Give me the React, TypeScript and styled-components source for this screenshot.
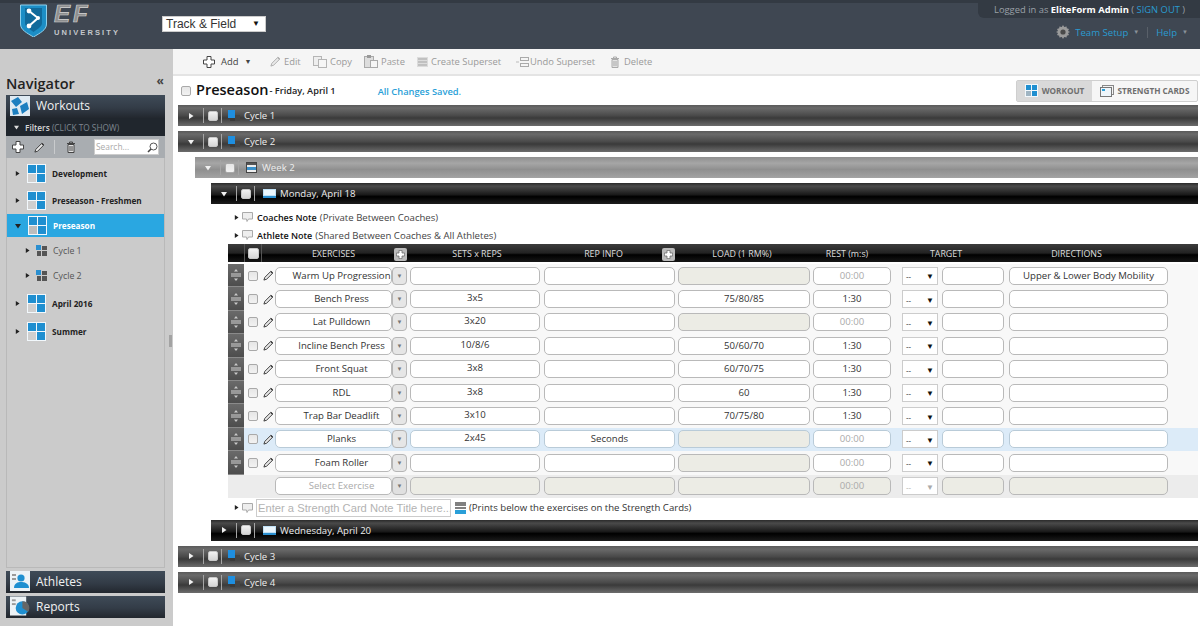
import React from 'react';
import styled, { createGlobalStyle } from 'styled-components';

const Global = createGlobalStyle`
  html, body { margin: 0; padding: 0; background: #fff; height: 626px; overflow: hidden; }
  body { font-family: "Open Sans", "Noto Sans", sans-serif; }
  * { box-sizing: border-box; }
`;

const Page = styled.div`width: 1200px; height: 626px; display: flex; flex-direction: column; overflow: hidden;`;

const Header = styled.header`
  height: 49px; flex: none; background: #3f4752; border-top: 3px solid #333a43;
  display: flex; position: relative;
`;
const LogoBox = styled.div`width: 162px; flex: none; padding: 1px 0 0 20px; display: flex; gap: 7px;`;
const LogoText = styled.div`display: flex; flex-direction: column; color: #b9b9b9;`;
const LogoEF = styled.span`display: block; height: 24px; margin-top: -2px; font: italic 900 24px/24px "Liberation Sans", sans-serif; letter-spacing: 3px; color: #8e8f8f; -webkit-text-stroke: .7px #d2d2d2;`;
const LogoSub = styled.span`display: block; font: 700 7.5px/9px "Liberation Sans", sans-serif; letter-spacing: 2.1px; color: #c4c8cc; margin-top: 2px;`;
const TeamSelect = styled.div`
  margin-top: 13px; width: 104px; height: 16px; background: #fff; border: 1px solid #ccc;
  font: 12px/14px "Liberation Sans", sans-serif; color: #333; padding-left: 3px; position: relative;
`;
const SelectArrow = styled.span`position: absolute; right: 5px; top: 0; font-size: 8px; color: #111;`;
const HeaderRight = styled.div`margin-left: auto; display: flex; flex-direction: column; align-items: flex-end;`;
const LoginTab = styled.div`
  width: 222px; height: 16px; background: #333a43; border-bottom-left-radius: 6px; margin-top: -1px;
  font-size: 9.4px; line-height: 15px; color: #9aa0a7; padding-left: 16px; white-space: nowrap;
`;
const LoginName = styled.b`color: #fff; font-weight: 700;`;
const LinkBlue = styled.span`color: #2a9bd0;`;
const MenuRow = styled.div`display: flex; align-items: center; height: 18px; margin-top: 5px; padding-right: 9px; font-size: 9.6px; color: #2a9bd0; gap: 5px;`;
const MenuCaret = styled.span`color: #8a929a; font-size: 6px; margin-right: 3px;`;
const MenuSep = styled.span`width: 1px; height: 11px; background: #596069; margin-right: 3px;`;

const Body = styled.div`flex: 1; display: flex; min-height: 0;`;

const Sidebar = styled.aside`width: 173px; flex: none; background: #cbcbcb; padding: 0 8px 8px 6px; display: flex; flex-direction: column; position: relative;`;
const NavHead = styled.div`height: 46px; display: flex; align-items: flex-end; justify-content: space-between; padding-right: 1px;`;
const NavTitle = styled.div`font-size: 14.5px; font-weight: 600; color: #222; line-height: 21px; margin-bottom: 1px;`;
const Chevrons = styled.div`font-size: 12px; font-weight: 700; color: #444; line-height: 14px; margin-bottom: 7px;`;
const Section = styled.div`
  height: 23px; flex: none; display: flex; align-items: center; gap: 6px; padding: 0 0 2px 4px; color: #f1f1f1; font-size: 12px;
  background: linear-gradient(#3f4b58, #333c47 55%, #22272e);
`;
const SectionBottom = styled(Section)`height: 22px; margin-top: 3px;`;
const FilterBar = styled.div`
  height: 18px; background: #20262d; color: #d8d8d8; font-size: 8.3px; font-weight: 600; display: flex; align-items: center; gap: 6px; padding-left: 8px;
`;
const FilterHint = styled.span`color: #7f8790; font-weight: 400;`;
const Tools = styled.div`height: 22px; background: #a9adb1; display: flex; align-items: center; padding-left: 6px; position: relative;`;
const ToolSpace = styled.span`width: 10px; flex: none;`;
const ToolDiv = styled.span`width: 1px; height: 14px; background: #c9cbcd; margin: 0 10px 0 9px;`;
const SearchBox = styled.div`
  margin-left: auto; margin-right: 6px; width: 65px; height: 16px; background: #fff; border: 1px solid #ccc;
  font-size: 8.4px; color: #aaa; line-height: 14px; padding-left: 1px; display: flex; justify-content: space-between; align-items: center;
`;
const Tree = styled.div`flex: 1; border: 1px solid #b9b9b9; border-top: 0; padding-top: 2px;`;
const TreeItem = styled.div<{ $active?: boolean; $top?: number }>`
  height: ${p => (p.$active ? '23px' : '27px')}; margin-top: ${p => p.$top ?? 0}px;
  display: flex; align-items: center; padding-left: 8px; gap: 7px;
  background: ${p => (p.$active ? '#2aa7e1' : 'transparent')};
  color: ${p => (p.$active ? '#fff' : '#222')}; font-size: 8.2px; font-weight: 700; white-space: nowrap;
`;
const TreeLabel = styled.span`margin-left: -1px;`;
const SubList = styled.div`padding-top: 1px;`;
const SubItem = styled.div`height: 25px; display: flex; align-items: center; padding-left: 18px; gap: 6px; font-size: 8.8px; color: #555;`;
const Splitter = styled.span`position: absolute; right: 1px; top: 286px; width: 3px; height: 12px; background: #a3a3a3;`;

const Main = styled.main`flex: 1; min-width: 0; display: flex; flex-direction: column;`;
const Toolbar = styled.div`
  height: 27px; flex: none; background: #f5f5f5; border-bottom: 2px solid #e4e4e4; padding-left: 30px;
  display: flex; align-items: center; font-size: 9.4px; color: #9a9a9a;
`;
const ToolBtn = styled.span<{ $dark?: boolean; $w: number; $gap?: number }>`
  width: ${p => p.$w}px; flex: none; display: flex; align-items: center; gap: ${p => p.$gap ?? 3}px; white-space: nowrap;
  color: ${p => (p.$dark ? '#444' : '#9a9a9a')};
`;
const AddCaret = styled.span`font-size: 7px; margin-left: 0;`;
const TitleRow = styled.div`height: 29px; flex: none; display: flex; align-items: center; padding: 0 2px 0 8px; position: relative;`;
const Check = styled.span<{ $size?: number; $light?: boolean }>`
  width: ${p => p.$size ?? 10}px; height: ${p => p.$size ?? 10}px; flex: none; display: block; border-radius: 2px;
  background: ${p => (p.$light ? 'linear-gradient(#f2f2f2,#d5d5d5)' : 'linear-gradient(#e6e6e6,#f2f2f2)')};
  border: 1px solid ${p => (p.$light ? '#c8c8c8' : '#a9a9a9')};
`;
const PageTitle = styled.h1`margin: -2px 0 0 5px; font-size: 14.5px; font-weight: 600; color: #111; line-height: 20px;`;
const PageDate = styled.span`font-size: 9.2px; font-weight: 600; color: #222; margin-left: 1px; margin-top: -1px; white-space: nowrap;`;
const Saved = styled.span`font-size: 9.3px; font-weight: 600; color: #2a9fd8; margin-left: 42px; margin-top: 1px;`;
const ViewSwitch = styled.div`margin-left: auto; display: flex; height: 22px; border: 1px solid #cfcfcf; border-radius: 2px; background: #f6f6f6; margin-top: 0;`;
const ViewBtn = styled.span<{ $on?: boolean; $w: number }>`
  width: ${p => p.$w}px; display: flex; align-items: center; justify-content: center; gap: 4px;
  font-size: 8.2px; font-weight: 700; color: #6f6f6f; white-space: nowrap;
  background: ${p => (p.$on ? '#d9d9d9' : 'transparent')};
`;

const Content = styled.div`padding: 0 2px 0 5px; display: flex; flex-direction: column;`;
const barBg = {
  cycle: 'linear-gradient(#5a5a5a, #6a6a6a 15%, #4a4a4a 50%, #3a3a3a 62%, #6c6c6c)',
  week: 'linear-gradient(#8f8f8f, #a6a6a6 30%, #8f8f8f 60%, #a3a3a3)',
  day: 'linear-gradient(#2a2a2a, #4a4a4a 15%, #1a1a1a 55%, #000 65%, #1c1c1c)',
};
const Bar = styled.div<{ $kind: 'cycle' | 'week' | 'day'; $indent?: number; $top?: number }>`
  height: 21px; flex: none; margin-left: ${p => p.$indent ?? 0}px; margin-top: ${p => p.$top ?? 5}px;
  background: ${p => barBg[p.$kind]}; display: flex; align-items: center; color: #eee; font-size: 9.6px;
`;
const BarToggle = styled.span`width: 25px; flex: none; display: flex; justify-content: center;`;
const BarCell = styled.span`
  width: 19px; height: 15px; flex: none; display: flex; align-items: center; justify-content: center;
  border-left: 1px solid #a5a5a5; border-right: 1px solid #a5a5a5; margin-right: 6px;
`;
const BarLabel = styled.span`margin-left: 4px; white-space: nowrap;`;

const WorkoutBlock = styled.div`margin-left: 50px; display: flex; flex-direction: column;`;
const NoteRow = styled.div<{ $h: number; $top?: number }>`
  height: ${p => p.$h}px; margin-top: ${p => p.$top ?? 0}px; display: flex; align-items: center; gap: 3px; padding-left: 6px;
  font-size: 9.6px; color: #444; white-space: nowrap;
`;
const NoteStrong = styled.b`color: #111; font-weight: 600; font-size: 9px; margin-left: 1px;`;
const NoteHint = styled.span`color: #333;`;

const COLS = '16px 18px 13px 117px 18px 130px 4px 131px 3px 132px 3px 78px 11px 36px 4px 62px 5px 159px 1fr';
const TableHead = styled.div`
  height: 18px; display: grid; grid-template-columns: ${COLS}; align-items: center;
  background: linear-gradient(#3c3c3c, #222 50%, #000 60%, #161616);
  color: #ddd; font-size: 8.9px; text-align: center; white-space: nowrap;
`;
const HeadCheck = styled.span`
  grid-column: 2; align-self: stretch; display: flex; align-items: center; justify-content: center;
  border-left: 1px solid #555; border-right: 1px solid #555;
`;
const HeadCell = styled.span<{ $col: string; $pr?: number; $pl?: number }>`
  grid-column: ${p => p.$col}; position: relative;
  padding-right: ${p => p.$pr ?? 0}px; padding-left: ${p => p.$pl ?? 0}px;
`;
const HeadPlus = styled.span<{ $right: number }>`
  position: absolute; right: ${p => p.$right}px; top: 1px; width: 13px; height: 13px; background: #bbb; border-radius: 2px;
  display: flex; align-items: center; justify-content: center;
`;
const Rows = styled.div`margin-top: 2px;`;
const Row = styled.div<{ $tone?: 'hi' | 'blank' }>`
  height: 23.4px; display: grid; grid-template-columns: ${COLS}; align-items: center;
  background: ${p => (p.$tone === 'hi' ? '#dcebf8' : p.$tone === 'blank' ? '#ececec' : '#f8f8f8')};
`;
const Handle = styled.span`
  grid-column: 1; align-self: stretch; background: linear-gradient(#6a6a6a, #4d4d4d);
  display: flex; align-items: center; justify-content: center; border-bottom: 1px solid #8a8a8a;
`;
const CheckCell = styled.span`grid-column: 2; justify-self: center;`;
const PencilCell = styled.span`grid-column: 3; justify-self: center; display: flex;`;
const Field = styled.span<{ $col: number; $off?: boolean; $muted?: boolean; $hi?: boolean }>`
  grid-column: ${p => p.$col}; height: 18px; border-radius: 5px; text-align: center; font-size: 9.6px; line-height: 16px;
  border: 1px solid ${p => (p.$hi ? '#b9cbd8' : '#b9b9b9')};
  background: ${p => (p.$off ? '#ecece5' : '#fff')};
  color: ${p => (p.$muted ? '#aaa' : '#333')}; white-space: nowrap; overflow: hidden;
`;
const ExerciseField = styled(Field)`padding-left: 16px;`;
const SetsField = styled(Field)`line-height: 14px;`;
const ExButton = styled.span<{ $off?: boolean }>`
  grid-column: 5; width: 15px; height: 18px; background: ${p => (p.$off ? '#e0e0e0' : '#e6e6e6')}; border: 1px solid #b5b5b5; border-radius: 4px;
  display: flex; align-items: center; justify-content: center; font-size: 6px; color: #777;
`;
const MiniSelect = styled.span<{ $off?: boolean }>`
  grid-column: 14; height: 18px; border: 1px solid #ccc; background: #fff;
  display: flex; align-items: center; justify-content: space-between; padding: 0 3px; font-size: 8px; color: ${p => (p.$off ? '#aaa' : '#111')};
`;
const MiniArrow = styled.span`font-size: 8px;`;
const NoteInput = styled.span`
  width: 195px; height: 18px; border: 1px solid #ccc; background: #fff; color: #b3b3b3; margin-left: 0;
  font: 11.2px/16px "Liberation Sans", sans-serif; padding-left: 1px; overflow: hidden;
`;
const StackIcon = styled.span`width: 11px; height: 12px; flex: none; margin-left: 1px; background: linear-gradient(#808080 0 30%, #fff 30% 40%, #808080 40% 60%, #fff 60% 70%, #2a9fd8 70%);`;

const Tri = ({ dir = 'right', color = '#222', size = 6 }: { dir?: 'right' | 'down'; color?: string; size?: number }) => (
  <svg width={size} height={size} viewBox="0 0 6 6" style={{ flex: 'none' }}>
    <path d={dir === 'right' ? 'M1 0 L5.5 3 L1 6 Z' : 'M0 1 L6 1 L3 5.5 Z'} fill={color} />
  </svg>
);

const Grid4 = ({ size = 19, off = '#cfcfcf' }: { size?: number; off?: string }) => {
  const c = size / 2;
  return (
    <svg width={size} height={size} viewBox={`0 0 ${size} ${size}`} style={{ flex: 'none' }}>
      <rect x={0} y={0} width={size} height={size} fill="#f2f8fc" />
      <rect x={1} y={1} width={c - 1.5} height={c - 1.5} fill="#1f8fd0" />
      <rect x={c + 0.5} y={1} width={c - 1.5} height={c - 1.5} fill="#1f8fd0" />
      <rect x={1} y={c + 0.5} width={c - 1.5} height={c - 1.5} fill={off} />
      <rect x={c + 0.5} y={c + 0.5} width={c - 1.5} height={c - 1.5} fill="#1f8fd0" />
    </svg>
  );
};
const SmallCycle = () => (
  <svg width="11" height="11" viewBox="0 0 11 11" style={{ flex: 'none' }}>
    <rect x="0" y="0" width="5" height="5" fill="#2a8fd0" /><rect x="6" y="1" width="5" height="4" fill="#555" />
    <rect x="1" y="6" width="4" height="5" fill="#555" /><rect x="6" y="6" width="5" height="5" fill="#555" />
  </svg>
);
const BarCycleIcon = () => (
  <svg width="12" height="12" viewBox="0 0 12 12" style={{ flex: 'none' }}>
    <rect x="0" y="0" width="7" height="8" fill="#1f8fe0" /><rect x="7" y="5" width="5" height="6" fill="#444" /><rect x="2" y="8" width="5" height="3" fill="#3a3a3a" />
  </svg>
);
const WeekIcon = () => (
  <svg width="13" height="11" viewBox="0 0 13 11" style={{ flex: 'none' }}>
    <rect x="1.5" y=".5" width="10" height="10" fill="#eee" stroke="#444" strokeWidth="1" /><rect x="2" y="1" width="9" height="2" fill="#555" /><rect x="2" y="5" width="9" height="3" fill="#3a8fc8" />
  </svg>
);
const DayIcon = () => (
  <svg width="15" height="9" viewBox="0 0 15 9" style={{ flex: 'none' }}>
    <rect x="2" width="13" height="9" fill="#bfe0f5" /><rect x="3" y="1" width="11" height="5" fill="#eaf6fd" /><rect x="2" y="7" width="13" height="2" fill="#2a8fd0" />
  </svg>
);
const Plus = ({ size = 12, color = '#555', fill = '#fff' }: { size?: number; color?: string; fill?: string }) => (
  <svg width={size} height={size} viewBox="0 0 12 12" style={{ flex: 'none' }}>
    <path d="M4 .5 H8 V4 H11.5 V8 H8 V11.5 H4 V8 H.5 V4 H4 Z" fill={fill} stroke={color} strokeWidth="1" />
  </svg>
);
const Pencil = ({ color = '#333', size = 11 }: { color?: string; size?: number }) => (
  <svg width={size} height={size} viewBox="0 0 12 12" style={{ flex: 'none' }}>
    <path d="M1 11 L2 8 L8.5 1.5 L10.5 3.5 L4 10 Z" fill="#e8e8e8" stroke={color} strokeWidth="1" />
    <path d="M8 2 L10 4 L11 3 L9 1 Z" fill={color} />
  </svg>
);
const Sheets = ({ color = '#b5b5b5' }: { color?: string }) => (
  <svg width="14" height="12" viewBox="0 0 14 12" style={{ flex: 'none' }}>
    <rect x=".5" y=".5" width="8" height="9" fill="#eee" stroke={color} /><rect x="5.5" y="3.5" width="8" height="8" fill="#f6f6f6" stroke={color} />
  </svg>
);
const Clipboard = () => (
  <svg width="14" height="13" viewBox="0 0 14 13" style={{ flex: 'none' }}>
    <rect x=".5" y="1.5" width="9" height="11" fill="#ddd" stroke="#aaa" /><rect x="3" y="0" width="4" height="3" fill="#999" /><rect x="6.5" y="5.5" width="7" height="7" fill="#f6f6f6" stroke="#aaa" />
  </svg>
);
const Lines = () => (
  <svg width="13" height="12" viewBox="0 0 13 12" style={{ flex: 'none' }}>
    <rect x="1" y="1" width="11" height="10" fill="#dcdcdc" /><path d="M2 3 H11 M2 6 H11 M2 9 H11" stroke="#a5a5a5" />
  </svg>
);
const UndoLines = () => (
  <svg width="13" height="12" viewBox="0 0 13 12" style={{ flex: 'none' }}>
    <path d="M0 6 H3" stroke="#bbb" /><rect x="4.5" y="1.5" width="8" height="3" fill="#f5f5f5" stroke="#aaa" /><rect x="4.5" y="7.5" width="8" height="3" fill="#f5f5f5" stroke="#aaa" />
  </svg>
);
const CardIcon = () => (
  <svg width="14" height="12" viewBox="0 0 14 12" style={{ flex: 'none' }}>
    <rect x="2.5" y=".5" width="11" height="9" fill="#f4f4f4" stroke="#888" /><rect x=".5" y="2.5" width="11" height="9" fill="#eef5fa" stroke="#777" /><rect x="2" y="4" width="3" height="2" fill="#2a9fd8" />
  </svg>
);
const Trash = ({ color = '#aaa', size = 12 }: { color?: string; size?: number }) => (
  <svg width={size} height={size} viewBox="0 0 12 12" style={{ flex: 'none' }}>
    <path d="M2 2.5 H10 M4.5 2 V1 H7.5 V2" stroke={color} fill="none" /><path d="M3 3.5 H9 V11.5 H3 Z" fill="#e2e2e2" stroke={color} /><path d="M5 5 V10 M7 5 V10" stroke={color} />
  </svg>
);
const Gear = () => (
  <svg width="14" height="14" viewBox="0 0 14 14" style={{ flex: 'none' }}>
    <path d="M7 0 L8.2 2 L10.6 1.4 L10.8 3.2 L13 4 L12 6 L14 7 L12 8 L13 10 L10.8 10.8 L10.6 12.6 L8.2 12 L7 14 L5.8 12 L3.4 12.6 L3.2 10.8 L1 10 L2 8 L0 7 L2 6 L1 4 L3.2 3.2 L3.4 1.4 L5.8 2 Z" fill="#9b9b9b" />
    <circle cx="7" cy="7" r="2.6" fill="#4a4a4a" />
  </svg>
);
const Bubble = () => (
  <svg width="11" height="10" viewBox="0 0 11 10" style={{ flex: 'none' }}>
    <path d="M.5 .5 H10.5 V7 H6.5 L5 9.5 L4.5 7 H.5 Z" fill="#eee" stroke="#aaa" />
  </svg>
);
const MoveHandle = () => (
  <svg width="10" height="12" viewBox="0 0 10 12"><path d="M5 0 L7 2.5 H3 Z M5 12 L3 9.5 H7 Z" fill="#c9c9c9" /><path d="M0 5 H10 M0 7 H10" stroke="#d5d5d5" /></svg>
);
const Magnifier = () => (
  <svg width="11" height="11" viewBox="0 0 11 11" style={{ flex: 'none' }}><circle cx="6.5" cy="4.5" r="3.5" fill="#fff" stroke="#555" /><path d="M4 7 L1 10" stroke="#444" strokeWidth="1.6" /></svg>
);
const Logo = () => (
  <svg width="27" height="33" viewBox="0 0 27 33" style={{ flex: 'none' }}>
    <path d="M.5 1 H26.5 V20 C26.5 26 20 29 13.5 33 C7 29 .5 26 .5 20 Z" fill="#1c8ec6" stroke="#8fd0ec" />
    <path d="M5 4 H22 V19 C22 23 17 25 13.5 28 C10 25 5 23 5 19 Z" fill="#116a9b" />
    <path d="M9 7 L18 14 L9 22" fill="none" stroke="#fff" strokeWidth="2" /><circle cx="9" cy="7" r="2.4" fill="#fff" /><circle cx="18" cy="14" r="2" fill="#fff" /><circle cx="9" cy="22" r="2.4" fill="#fff" />
  </svg>
);
const WorkoutsIcon = () => (
  <svg width="20" height="20" viewBox="0 0 20 20" style={{ flex: 'none' }}>
    <rect width="20" height="20" fill="#dfeaf2" /><path d="M1 5 L8 1 L12 6 L6 11 Z M10 10 L17 6 L19 13 L12 18 Z M2 13 L7 12 L9 18 L3 19 Z" fill="#1d7fc0" />
  </svg>
);
const AthletesIcon = () => (
  <svg width="20" height="20" viewBox="0 0 20 20" style={{ flex: 'none' }}>
    <rect width="20" height="20" fill="#edf3f7" /><circle cx="11" cy="7" r="3.6" fill="#1f8fd0" /><path d="M4 17 C4 12 8 11 11 11 C14 11 19 12 19 17 Z" fill="#1f8fd0" /><rect x="2" y="3" width="4" height="2" fill="#999" /><rect x="2" y="7" width="4" height="2" fill="#999" />
  </svg>
);
const ReportsIcon = () => (
  <svg width="20" height="20" viewBox="0 0 21 20" style={{ flex: 'none' }}>
    <rect width="17" height="20" fill="#edf3f7" /><rect x="2" y="3" width="4" height="2" fill="#999" /><rect x="2" y="7" width="4" height="2" fill="#999" /><circle cx="13" cy="12" r="7" fill="#1f8fd0" /><path d="M13 12 V5 A7 7 0 0 1 19 16 Z" fill="#666" />
  </svg>
);

type Ex = { name: string; sets?: string; info?: string; load?: string; loadOff?: boolean; rest?: string; dir?: string; hi?: boolean };
const exercises: Ex[] = [
  { name: 'Warm Up Progression', loadOff: true, dir: 'Upper & Lower Body Mobility' },
  { name: 'Bench Press', sets: '3x5', load: '75/80/85', rest: '1:30' },
  { name: 'Lat Pulldown', sets: '3x20', loadOff: true },
  { name: 'Incline Bench Press', sets: '10/8/6', load: '50/60/70', rest: '1:30' },
  { name: 'Front Squat', sets: '3x8', load: '60/70/75', rest: '1:30' },
  { name: 'RDL', sets: '3x8', load: '60', rest: '1:30' },
  { name: 'Trap Bar Deadlift', sets: '3x10', load: '70/75/80', rest: '1:30' },
  { name: 'Planks', sets: '2x45', info: 'Seconds', loadOff: true, hi: true },
  { name: 'Foam Roller', loadOff: true },
];

const BarHead = ({ open, light, icon, label }: { open?: boolean; light?: boolean; icon: React.ReactNode; label: string }) => (
  <>
    <BarToggle><Tri dir={open ? 'down' : 'right'} color="#f0f0f0" /></BarToggle>
    <BarCell><Check $size={10} $light={!light} /></BarCell>
    {icon}
    <BarLabel>{label}</BarLabel>
  </>
);

export default function App() {
  return (
    <Page>
      <Global />
      <Header>
        <LogoBox>
          <Logo />
          <LogoText>
            <LogoEF>EF</LogoEF>
            <LogoSub>UNIVERSITY</LogoSub>
          </LogoText>
        </LogoBox>
        <TeamSelect>Track &amp; Field<SelectArrow>▼</SelectArrow></TeamSelect>
        <HeaderRight>
          <LoginTab>Logged in as <LoginName>EliteForm Admin</LoginName> ( <LinkBlue>SIGN OUT</LinkBlue> )</LoginTab>
          <MenuRow>
            <Gear />
            <span>Team Setup</span><MenuCaret>▼</MenuCaret>
            <MenuSep />
            <span>Help</span><MenuCaret>▼</MenuCaret>
          </MenuRow>
        </HeaderRight>
      </Header>
      <Body>
        <Sidebar>
          <NavHead>
            <NavTitle>Navigator</NavTitle>
            <Chevrons>«</Chevrons>
          </NavHead>
          <Section><WorkoutsIcon /><span>Workouts</span></Section>
          <FilterBar><Tri dir="down" color="#ddd" size={5} /><span>Filters <FilterHint>(CLICK TO SHOW)</FilterHint></span></FilterBar>
          <Tools>
            <Plus size={12} color="#444" />
            <ToolSpace />
            <Pencil />
            <ToolDiv />
            <Trash color="#444" size={12} />
            <SearchBox>Search...<Magnifier /></SearchBox>
          </Tools>
          <Tree>
            <TreeItem><Tri size={5} /><Grid4 /><TreeLabel>Development</TreeLabel></TreeItem>
            <TreeItem><Tri size={5} /><Grid4 /><TreeLabel>Preseason - Freshmen</TreeLabel></TreeItem>
            <TreeItem $active><Tri size={6} dir="down" /><Grid4 off="#bdbdbd" /><TreeLabel>Preseason</TreeLabel></TreeItem>
            <SubList>
              <SubItem><Tri size={5} /><SmallCycle /><span>Cycle 1</span></SubItem>
              <SubItem><Tri size={5} /><SmallCycle /><span>Cycle 2</span></SubItem>
            </SubList>
            <TreeItem $top={2}><Tri size={5} /><Grid4 /><TreeLabel>April 2016</TreeLabel></TreeItem>
            <TreeItem $top={1}><Tri size={5} /><Grid4 /><TreeLabel>Summer</TreeLabel></TreeItem>
          </Tree>
          <SectionBottom><AthletesIcon /><span>Athletes</span></SectionBottom>
          <SectionBottom><ReportsIcon /><span>Reports</span></SectionBottom>
          <Splitter />
        </Sidebar>
        <Main>
          <Toolbar>
            <ToolBtn $dark $w={67} $gap={6}><Plus size={12} color="#444" /><span>Add</span><AddCaret>▼</AddCaret></ToolBtn>
            <ToolBtn $w={43}><Pencil color="#aaa" /><span>Edit</span></ToolBtn>
            <ToolBtn $w={51}><Sheets /><span>Copy</span></ToolBtn>
            <ToolBtn $w={52}><Clipboard /><span>Paste</span></ToolBtn>
            <ToolBtn $w={100} $gap={2}><Lines /><span>Create Superset</span></ToolBtn>
            <ToolBtn $w={93} $gap={1}><UndoLines /><span>Undo Superset</span></ToolBtn>
            <ToolBtn $w={50}><Trash /><span>Delete</span></ToolBtn>
          </Toolbar>
          <TitleRow>
            <Check $size={10} />
            <PageTitle>Preseason</PageTitle>
            <PageDate>- Friday, April 1</PageDate>
            <Saved>All Changes Saved.</Saved>
            <ViewSwitch>
              <ViewBtn $on $w={75}><Grid4 size={13} off="#9fb4c2" />WORKOUT</ViewBtn>
              <ViewBtn $w={105}><CardIcon />STRENGTH CARDS</ViewBtn>
            </ViewSwitch>
          </TitleRow>
          <Content>
            <Bar $kind="cycle" $top={0}><BarHead icon={<BarCycleIcon />} label="Cycle 1" /></Bar>
            <Bar $kind="cycle"><BarHead open icon={<BarCycleIcon />} label="Cycle 2" /></Bar>
            <Bar $kind="week" $indent={17}><BarHead open light icon={<WeekIcon />} label="Week 2" /></Bar>
            <Bar $kind="day" $indent={33}><BarHead open icon={<DayIcon />} label="Monday, April 18" /></Bar>
            <WorkoutBlock>
              <NoteRow $h={18} $top={4}><Tri size={5} /><Bubble /><NoteStrong>Coaches Note</NoteStrong> (Private Between Coaches)</NoteRow>
              <NoteRow $h={18}><Tri size={5} /><Bubble /><NoteStrong>Athlete Note</NoteStrong> (Shared Between Coaches &amp; All Athletes)</NoteRow>
              <TableHead>
                <HeadCheck><Check $size={11} $light /></HeadCheck>
                <HeadCell $col="4">EXERCISES<HeadPlus $right={-15}><Plus size={9} color="#666" /></HeadPlus></HeadCell>
                <HeadCell $col="6" $pl={4}>SETS x REPS</HeadCell>
                <HeadCell $col="8" $pr={12}>REP INFO<HeadPlus $right={0}><Plus size={9} color="#666" /></HeadPlus></HeadCell>
                <HeadCell $col="10" $pr={4}>LOAD (1 RM%)</HeadCell>
                <HeadCell $col="12" $pr={10}>REST (m:s)</HeadCell>
                <HeadCell $col="14 / 17" $pr={14}>TARGET</HeadCell>
                <HeadCell $col="18" $pr={24}>DIRECTIONS</HeadCell>
              </TableHead>
              <Rows>
                {exercises.map(e => (
                  <Row key={e.name} $tone={e.hi ? 'hi' : undefined}>
                    <Handle><MoveHandle /></Handle>
                    <CheckCell><Check $size={10} /></CheckCell>
                    <PencilCell><Pencil /></PencilCell>
                    <ExerciseField $col={4} $hi={e.hi}>{e.name}</ExerciseField>
                    <ExButton>▼</ExButton>
                    <SetsField $col={6} $hi={e.hi}>{e.sets}</SetsField>
                    <Field $col={8} $hi={e.hi}>{e.info}</Field>
                    <Field $col={10} $off={e.loadOff} $hi={e.hi}>{e.load}</Field>
                    <Field $col={12} $muted={!e.rest} $hi={e.hi}>{e.rest ?? '00:00'}</Field>
                    <MiniSelect>--<MiniArrow>▼</MiniArrow></MiniSelect>
                    <Field $col={16} $hi={e.hi} />
                    <Field $col={18} $hi={e.hi}>{e.dir}</Field>
                  </Row>
                ))}
                <Row $tone="blank">
                  <ExerciseField $col={4} $muted>Select Exercise</ExerciseField>
                  <ExButton $off>▼</ExButton>
                  <Field $col={6} $off />
                  <Field $col={8} $off />
                  <Field $col={10} $off />
                  <Field $col={12} $off $muted>00:00</Field>
                  <MiniSelect $off>--<MiniArrow>▼</MiniArrow></MiniSelect>
                  <Field $col={16} $off />
                  <Field $col={18} $off />
                </Row>
              </Rows>
              <NoteRow $h={20}><Tri size={5} /><Bubble /><NoteInput>Enter a Strength Card Note Title here...</NoteInput><StackIcon /><NoteHint>(Prints below the exercises on the Strength Cards)</NoteHint></NoteRow>
            </WorkoutBlock>
            <Bar $kind="day" $indent={33} $top={2}><BarHead icon={<DayIcon />} label="Wednesday, April 20" /></Bar>
            <Bar $kind="cycle"><BarHead icon={<BarCycleIcon />} label="Cycle 3" /></Bar>
            <Bar $kind="cycle"><BarHead icon={<BarCycleIcon />} label="Cycle 4" /></Bar>
          </Content>
        </Main>
      </Body>
    </Page>
  );
}
